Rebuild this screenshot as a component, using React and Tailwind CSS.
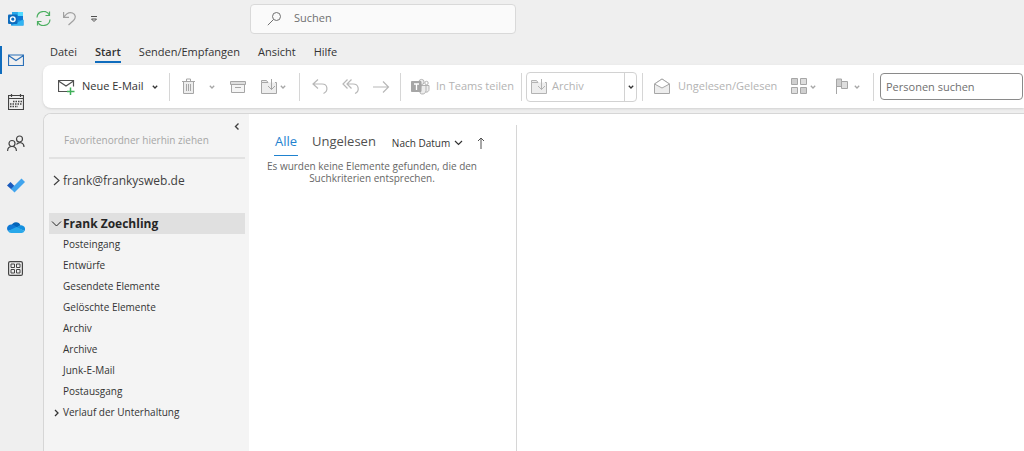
import { useState } from 'react';

const tabs = ['Datei', 'Start', 'Senden/Empfangen', 'Ansicht', 'Hilfe'];

const folders = [
  'Posteingang',
  'Entwürfe',
  'Gesendete Elemente',
  'Gelöschte Elemente',
  'Archiv',
  'Archive',
  'Junk-E-Mail',
  'Postausgang',
  'Verlauf der Unterhaltung',
];

function Icon({ className = '', w = 18, h = 18, children }) {
  return (
    <svg
      className={`shrink-0 ${className}`}
      width={w}
      height={h}
      viewBox={`0 0 ${w} ${h}`}
      fill="none"
      stroke="currentColor"
      aria-hidden="true"
    >
      {children}
    </svg>
  );
}

function Chevron({ className = '' }) {
  return (
    <Icon w={6} h={6} className={className}>
      <path d="M.8 1.8 3 4l2.2-2.2" strokeWidth="1.3" />
    </Icon>
  );
}

function FolderDown() {
  return (
    <Icon w={17} h={17}>
      <path d="M7 4.500H.5v11h15v-11H14M.5 4.500v-2h5l1.500 2" fill="#ededed" />
      <path d="M10.500 1v10.500M7 8l3.500 3.500L14 8" />
    </Icon>
  );
}

function Divider() {
  return <div className="w-px h-7 bg-[#d6d6d6] shrink-0" />;
}

/* ---------- Top bar ---------- */
function TitleBar() {
  return (
    <header className="h-[37px] flex items-center pl-2">
      <Icon w={16} h={16}>
        <g stroke="none">
          <path d="M4 1h11v8H4z" fill="#1490df" />
          <path d="M9.500 1H15v4H9.500z" fill="#50d9ff" />
          <path d="M4 1h5.500v4H4z" fill="#28a8ea" />
          <path d="M9.500 5H15v5H9.500z" fill="#0f78d4" />
          <path d="M3 9h12.500v5.500H3z" fill="#1a8fe0" />
          <path d="M3 14.500l12.500-6v6z" fill="#31b4f2" />
          <rect x="0" y="3.500" width="9.500" height="9.500" rx="1" fill="#0f6cbd" />
        </g>
        <circle cx="4.800" cy="8.200" r="2.300" stroke="#fff" strokeWidth="1.400" />
      </Icon>
      <button aria-label="Alle Ordner senden/empfangen" className="ml-3 text-[#4caf61]">
        <Icon w={15} h={15}>
          <path d="M1 6.500A6.500 6.500 0 0 1 13.500 4.500M14 8.500A6.500 6.500 0 0 1 1.500 10.500" strokeWidth="1.200" />
          <path d="M13.500.5v4H9.500M1.500 14.500v-4h4" strokeWidth="1.200" />
        </Icon>
      </button>
      <button aria-label="Rückgängig" className="ml-3 text-[#a0a0a0]">
        <Icon w={13} h={15}>
          <path d="M.6 1v5.400h5.400M1 6c2-3 5-5.400 8.500-4C13 3.500 13 7 10.500 9.500L5.500 14" strokeWidth="1.200" />
        </Icon>
      </button>
      <button aria-label="Symbolleiste anpassen" className="ml-[14px] text-[#505050]">
        <Icon w={8} h={8}>
          <path d="M1 1.500h6M1.500 4 4 6.500 6.500 4z" />
        </Icon>
      </button>
      <label className="ml-[152px] h-[30px] w-[266px] flex items-center gap-3 pl-4 border border-[#d9d9d9] rounded bg-[#fafafa] text-[#707070]">
        <Icon w={15} h={15}>
          <circle cx="9.500" cy="5.500" r="4" />
          <path d="M6.500 8.500.8 14.200" />
        </Icon>
        <input
          type="search"
          aria-label="Suchen"
          placeholder="Suchen"
          className="flex-1 min-w-0 bg-transparent outline-none text-[11px] placeholder:text-[#707070]"
        />
      </label>
    </header>
  );
}

/* ---------- Left app rail ---------- */
function AppRail() {
  return (
    <nav aria-label="Apps" className="w-[43px] shrink-0 flex flex-col text-[#444]">
      <a
        href="#mail"
        aria-label="E-Mail"
        className="h-7 mt-[9px] mb-[7px] pl-[6px] flex items-center border-l-2 border-[#0f6cbd] text-[#2b70b8]"
      >
        <Icon w={16} h={13}>
          <path d="M.5 1h15v10.500H.5zM.5 1.500 8 6.500l7.500-5" strokeWidth="1.200" />
        </Icon>
      </a>
      <a href="#kalender" aria-label="Kalender" className="h-[42px] pl-2 flex items-center">
        <Icon w={16} h={16}>
          <path d="M.5 1.500h15v14H.5zM.5 4.500h15M3.500 0v3M12.500 0v3" strokeWidth="1.200" />
          <path d="M5 7.500h9M2 10h12M2 12.500h8" strokeWidth="1.500" strokeDasharray="1.500 1" />
        </Icon>
      </a>
      <a href="#personen" aria-label="Personen" className="h-[41px] pl-[7px] flex items-center">
        <Icon w={18} h={17}>
          <circle cx="5" cy="8.500" r="3" strokeWidth="1.200" />
          <circle cx="12.500" cy="4" r="3" strokeWidth="1.200" />
          <path d="M.6 16c0-6 8.800-6 8.800 0M9.500 9.500c2.500-3.500 7.500-2 7.500 2.500" strokeWidth="1.200" />
        </Icon>
      </a>
      <a href="#todo" aria-label="To Do" className="h-[42px] pl-[7px] flex items-center">
        <Icon w={18} h={15}>
          <path d="M0 7.500 3.500 4l4 4L4.500 11.500z" fill="#195abd" stroke="none" />
          <path d="M4 11 14.500.5 18 4 7.500 14.500z" fill="#40a4ed" stroke="none" />
        </Icon>
      </a>
      <a href="#onedrive" aria-label="OneDrive" className="h-[41px] pl-[7px] flex items-center">
        <Icon w={18} h={12}>
          <g stroke="none">
            <path d="M4.500 4.500a4.800 4.800 0 0 1 9-.3L10 7z" fill="#0364b8" />
            <path d="M4.500 3.500A4 4 0 0 0 1 10l10-3-3.500-2.500a4 4 0 0 0-3-1z" fill="#0f78d4" />
            <path d="M9 6.500l4.500-2.300A3.900 3.900 0 0 1 17.500 10z" fill="#1490df" />
            <path d="M1 10 9.500 6l8 4a3.500 3.500 0 0 1-3 2H4a4 4 0 0 1-3-2z" fill="#28a8ea" />
          </g>
        </Icon>
      </a>
      <a href="#apps" aria-label="Weitere Apps" className="h-[42px] pl-2 flex items-center">
        <Icon w={15} h={15}>
          <rect x=".6" y=".6" width="13.800" height="13.800" rx="1.500" strokeWidth="1.200" />
          <path d="M3 3h3.500v3.500H3zM8.500 3H12v3.500H8.500zM3 8.500h3.500V12H3zM8.500 8.500H12V12H8.500z" />
        </Icon>
      </a>
    </nav>
  );
}

/* ---------- Ribbon ---------- */
function Ribbon() {
  return (
    <div className="h-[43px] flex items-center pl-[15px] rounded-l-lg bg-white text-[11px] text-[#b3b3b3] overflow-hidden whitespace-nowrap shadow-sm">
      <button className="w-[111px] shrink-0 flex items-center text-[#333]">
        <Icon w={18} h={16}>
          <path d="M9 12.500H.5V1.500h15v6M.5 2l7.500 5 7.500-5" stroke="#505050" strokeWidth="1.200" />
          <path d="M12.500 8.500v7.500M9 12.500h7.500" stroke="#3faf58" strokeWidth="1.500" />
        </Icon>
        <span className="ml-[6px]">Neue E-Mail</span>
        <Chevron className="ml-[9px]" />
      </button>
      <Divider />
      <div className="w-[129px] shrink-0 flex items-center pl-3 text-[#a6a6a6]">
        <button aria-label="Löschen">
          <Icon w={14} h={17}>
            <path d="M1.500 3.500h10v12h-10z" fill="#ededed" />
            <path d="M0 3.500h13M4.500 3V1h4v2M4.500 6v7M6.500 6v7M8.500 6v7" />
          </Icon>
        </button>
        <button aria-label="Löschoptionen" className="ml-[13px]">
          <Chevron />
        </button>
        <button aria-label="Archivieren" className="ml-[15px]">
          <Icon w={17} h={14}>
            <path d="M1.500 4.500h13v8h-13z" fill="#f5f5f5" />
            <path d="M.5 1.500h15v3H.5z" fill="#dedede" />
            <path d="M5 7.500h6" />
          </Icon>
        </button>
        <button aria-label="Verschieben" className="ml-[14px] flex items-center gap-[2px]">
          <FolderDown />
          <Chevron />
        </button>
      </div>
      <Divider />
      <div className="w-[100px] shrink-0 flex items-center gap-[13px] pl-3 text-[#b8b8b8]">
        <button aria-label="Antworten">
          <Icon w={17} h={17}>
            <path d="M6 1.500 1 6l5 4.500M1 6h9c6 0 6.500 7 1.500 9.500" strokeWidth="1.200" />
          </Icon>
        </button>
        <button aria-label="Allen antworten">
          <Icon w={18} h={17}>
            <path d="M5.500 1.500 1 6l4.500 4.500M9.500 1.500 5 6l4.500 4.500M5 6h6c6 0 7 7 2 9.500" strokeWidth="1.200" />
          </Icon>
        </button>
        <button aria-label="Weiterleiten">
          <Icon w={17} h={14}>
            <path d="M0 7h15.500M10 1.500 15.500 7 10 12.500" strokeWidth="1.200" />
          </Icon>
        </button>
      </div>
      <Divider />
      <button className="w-[120px] shrink-0 flex items-center gap-[6px] pl-[10px]">
        <Icon w={19} h={17}>
          <circle cx="10.500" cy="4" r="2.600" fill="#ededed" />
          <circle cx="15.500" cy="5" r="1.700" />
          <path d="M10 7.500h5v5a3.500 3.500 0 0 1-6 2.500zM15 7.500h3v4a2.600 2.600 0 0 1-3 2.600" fill="#ededed" />
          <path d="M.5 3.500h9.500v10H.5z" fill="#a6a6a6" stroke="#a6a6a6" />
          <path d="M3 6h5M5.500 6v6" stroke="#fff" strokeWidth="1.300" />
        </Icon>
        In Teams teilen
      </button>
      <Divider />
      <div className="w-[120px] shrink-0 flex items-center pl-1">
        <div className="w-[111px] h-[30px] flex items-stretch border border-[#d2d2d2] rounded">
          <button className="flex-1 flex items-center gap-1 pl-1">
            <FolderDown />
            Archiv
          </button>
          <button aria-label="QuickSteps" className="w-3 flex items-center justify-center border-l border-[#d2d2d2] text-[#333]">
            <Chevron />
          </button>
        </div>
      </div>
      <Divider />
      <div className="w-[230px] shrink-0 flex items-center pl-[11px] text-[#a6a6a6]">
        <button className="flex items-center gap-[7px] text-[#b3b3b3]">
          <Icon w={17} h={17} className="text-[#a6a6a6]">
            <path d="M.5 6 8 1l7.500 5v9.500H.5z" fill="#ededed" />
            <path d="M.5 6 8 1l7.500 5L8 10z" fill="#fff" />
          </Icon>
          Ungelesen/Gelesen
        </button>
        <button aria-label="Kategorisieren" className="ml-auto flex items-center gap-[2px]">
          <Icon w={17} h={17}>
            <path d="M.5.5h6v6h-6zM9.500 9.500h6v6h-6z" fill="#cfcfcf" />
            <path d="M9.500.5h6v6h-6zM.5 9.500h6v6h-6z" fill="#dedede" />
          </Icon>
          <Chevron />
        </button>
        <button aria-label="Zur Nachverfolgung" className="ml-5 mr-[13px] flex items-center gap-[5px]">
          <Icon w={13} h={17}>
            <path d="M.5 16V1h5v7.500h-5" fill="#cfcfcf" />
            <path d="M5.500 3.500h6v7h-6z" fill="#dedede" />
          </Icon>
          <Chevron />
        </button>
      </div>
      <Divider />
      <input
        type="text"
        aria-label="Personen suchen"
        placeholder="Personen suchen"
        className="ml-[6px] w-[143px] h-[27px] shrink-0 px-[5px] border border-[#8a8a8a] rounded text-[11px] placeholder:text-[#707070] outline-none"
      />
    </div>
  );
}

/* ---------- Folder pane ---------- */
function FolderPane() {
  return (
    <aside className="w-[205px] shrink-0 flex flex-col bg-[#f4f4f4] pl-[5px] pr-1 text-[#404040]">
      <button aria-label="Ordnerbereich minimieren" className="self-end mt-2 mr-1">
        <Icon w={8} h={9}>
          <path d="M5.500 1.500 2.500 4.500l3 3" strokeWidth="1.400" />
        </Icon>
      </button>
      <p className="h-[26px] pl-[15px] leading-[18px] text-[10px] text-[#a6a6a6]">
        Favoritenordner hierhin ziehen
      </p>
      <hr className="border-t-2 border-[#e2e2e2]" />
      <button className="mt-[11px] h-[21px] flex items-center pl-1 gap-[2px] text-xs">
        <Icon w={8} h={11}>
          <path d="M1 1l5 4.500L1 10" strokeWidth="1.200" />
        </Icon>
        frank@frankysweb.de
      </button>
      <button className="mt-[22px] h-[21px] flex items-center pl-[2px] gap-px text-xs font-bold bg-[#e0e0e0] text-[#262626]">
        <Icon w={11} h={8}>
          <path d="M1 1.500l4.500 4.500L10 1.500" />
        </Icon>
        Frank Zoechling
      </button>
      <ul className="text-[10px] text-[#333]">
        {folders.map((name) => (
          <li key={name}>
            <a href="#ordner" className="h-[21px] flex items-center pl-1">
              <span className="w-[10px]">
                {name === 'Verlauf der Unterhaltung' && (
                  <Icon w={7} h={8}>
                    <path d="M2 1l3 3-3 3" strokeWidth="1.300" />
                  </Icon>
                )}
              </span>
              {name}
            </a>
          </li>
        ))}
      </ul>
    </aside>
  );
}

/* ---------- Message list ---------- */
function MessageList() {
  const [filter, setFilter] = useState('Alle');

  return (
    <section className="w-[268px] shrink-0 mt-[11px] border-r border-[#d6d6d6]">
      <div className="h-[31px] flex items-end pl-[25px] text-[#505050]">
        {['Alle', 'Ungelesen'].map((name) => (
          <button
            key={name}
            onClick={() => setFilter(name)}
            className={`h-[27px] min-w-6 mr-[14px] text-[13px] border-b ${
              filter === name ? 'text-[#1f82cf] border-[#1f82cf]' : 'border-transparent'
            }`}
          >
            {name}
          </button>
        ))}
        <button className="h-[26px] ml-[2px] flex items-center gap-1 text-[10px] text-[#333] whitespace-nowrap">
          Nach Datum
          <Icon w={9} h={8}>
            <path d="M1 2l3.500 3.500L8 2" strokeWidth="1.200" />
          </Icon>
        </button>
        <button aria-label="Aufsteigend" className="h-[26px] ml-[14px]">
          <Icon w={8} h={12}>
            <path d="M4 12V1M1 4l3-3 3 3" />
          </Icon>
        </button>
      </div>
      <p className="mt-1 w-[246px] text-center text-[10px] leading-3 px-4 text-[#666]">
        Es wurden keine Elemente gefunden, die den Suchkriterien entsprechen.
      </p>
    </section>
  );
}

export default function App() {
  const [active, setActive] = useState('Start');

  return (
    <div className="min-h-screen flex flex-col bg-[#efefef] font-['Open_Sans',sans-serif] overflow-x-hidden">
      <TitleBar />
      <div className="flex-1 flex">
        <AppRail />
        <div className="flex-1 min-w-0 flex flex-col">
          <div role="tablist" className="h-7 flex items-start gap-[18px] pl-[7px] pt-[6px] text-[11px] text-[#333]">
            {tabs.map((tab) => (
              <button
                key={tab}
                role="tab"
                aria-selected={active === tab}
                onClick={() => setActive(tab)}
                className={`h-5 border-b-2 ${
                  active === tab ? 'font-semibold border-[#0f6cbd]' : 'border-transparent'
                }`}
              >
                {tab}
              </button>
            ))}
          </div>
          <Ribbon />
          <main className="mt-[5px] flex-1 flex bg-white border-t border-l border-[#d6d6d6] rounded-tl-lg overflow-hidden">
            <FolderPane />
            <MessageList />
            <section aria-label="Lesebereich" className="flex-1" />
          </main>
        </div>
      </div>
    </div>
  );
}
